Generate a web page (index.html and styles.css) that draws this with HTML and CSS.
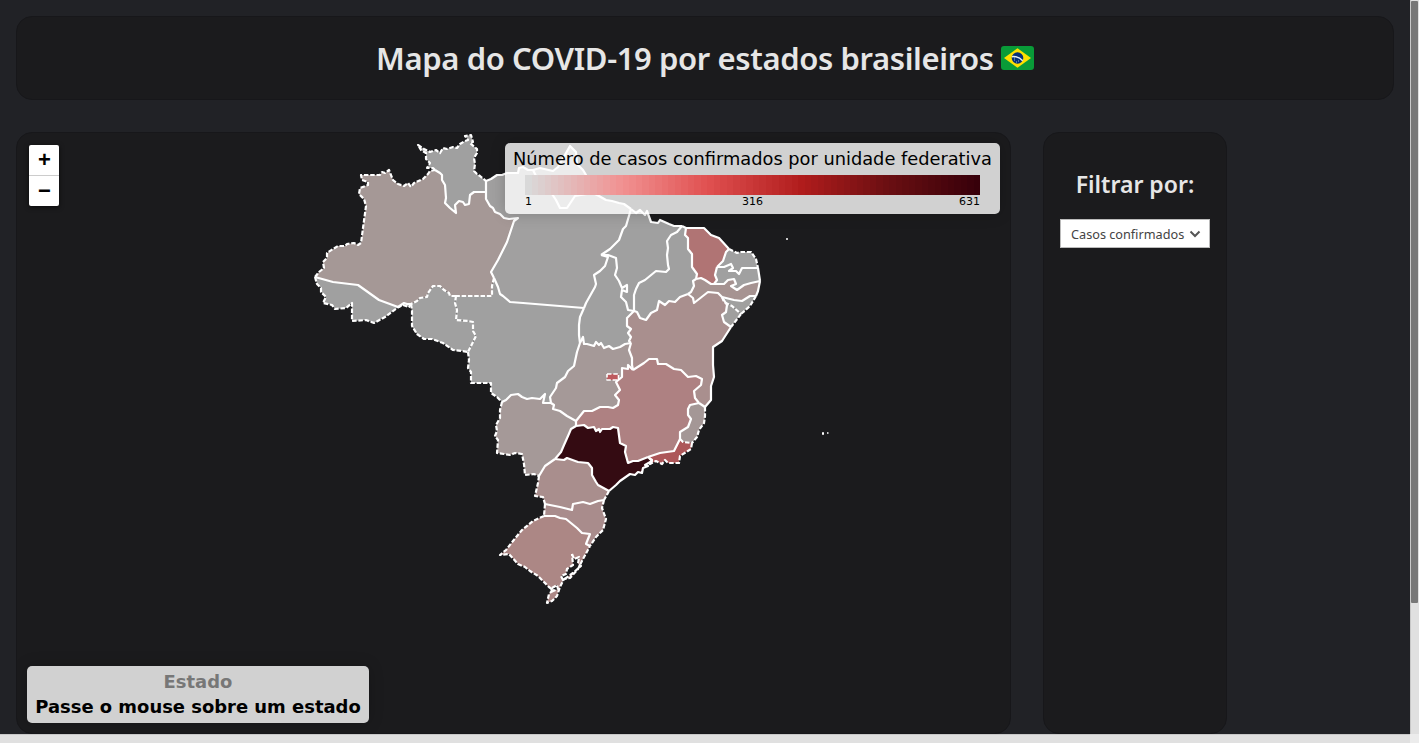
FILE: index.html
```html
<!DOCTYPE html>
<html lang="pt-BR">
<head>
<meta charset="utf-8">
<title>Mapa do COVID-19</title>
<link rel="stylesheet" href="styles.css">
</head>
<body>
<div class="page">
  <header class="card header">
    <h1 class="title">Mapa do COVID-19 por estados brasileiros</h1>
    <svg class="flag" viewBox="0 0 33 24"><rect width="33" height="24" rx="3" fill="#099b38"/><path d="M16.5 2.2 30 12 16.5 21.8 3 12z" fill="#fee000"/><circle cx="16.5" cy="12" r="5.8" fill="#063078"/><path d="M11 10.7q6.5-.7 10.7 4.1" fill="none" stroke="#e4edf5" stroke-width="1.5"/><path d="M13 14h1M15 16h1M17 15h1M13 12h1" stroke="#9ab9da"/></svg>
  </header>
  <main class="content">
    <section class="card map">
      <svg class="states" id="states" viewBox="17 133 993 600"></svg>
      <div class="zoom"><span class="zoom-btn">+</span><span class="zoom-btn">−</span></div>
      <div class="panel legend">
        <div class="legend-title">Número de casos confirmados por unidade federativa</div>
        <div class="ramp" id="ramp"></div>
        <div class="ticks"><span>1</span><span class="tick-mid">316</span><span class="tick-end">631</span></div>
      </div>
      <div class="panel info"><div class="info-title">Estado</div><div>Passe o mouse sobre um estado</div></div>
    </section>
    <aside class="card filter">
      <h2 class="filter-title">Filtrar por:</h2>
      <div class="select"><span>Casos confirmados</span><svg class="chevron" viewBox="0 0 12 8"><path d="M1.500 1.500 6 6l4.500-4.500" fill="none" stroke="#555" stroke-width="2"/></svg></div>
    </aside>
  </main>
</div>
<div class="vbar"><div class="thumb"></div></div>
<div class="hbar"></div>
<div class="corner"></div>
<script src="map.js"></script>
</body>
</html>
```
FILE: styles.css
```css
* { box-sizing: border-box; }
body { margin: 0; height: 743px; overflow: hidden; display: grid; grid-template: 734px 9px / 1410px 9px; background: #212226; font-family: "Noto Sans", sans-serif; }
.page { overflow: hidden; padding: 16px; }
.card { background: #1b1b1d; border: 1px solid #17171a; border-radius: 16px; }
.header { width: 1378px; height: 84px; display: flex; align-items: center; justify-content: center; gap: 7px; }
.title { margin: 0; width: 618px; color: #e6e6e6; font-size: 31px; font-weight: 600; line-height: 40px; letter-spacing: -.38px; white-space: nowrap; }
.flag { width: 33px; height: 24px; margin-top: -1px; }
.content { display: flex; gap: 32px; margin-top: 32px; }
.map { position: relative; width: 995px; height: 602px; overflow: hidden; }
.states { display: block; width: 993px; height: 600px; }
.zoom { position: absolute; left: 12px; top: 12px; width: 30px; height: 61px; background: #fff; border-radius: 2px; box-shadow: 0 1px 5px rgba(0,0,0,.65); }
.zoom-btn { display: block; height: 31px; padding-left: 1px; color: #000; font: bold 22px/30px "Liberation Sans", sans-serif; text-align: center; }
.zoom-btn:first-child { border-bottom: 1px solid #ccc; }
.panel { position: absolute; background: rgba(255,255,255,.8); border-radius: 5px; box-shadow: 0 0 15px rgba(0,0,0,.2); color: #000; font-family: "DejaVu Sans", sans-serif; white-space: nowrap; }
.legend { left: 488px; top: 10px; width: 495px; height: 71px; padding: 6px 8px; }
.legend-title { font-size: 17.800px; line-height: 20px; }
.ramp { display: flex; margin: 6px 12px 0; height: 20px; }
.ramp-step { flex: 1; }
.ticks { display: grid; grid-template-columns: 1fr 1fr 1fr; margin: 0 12px; font-size: 11px; line-height: 13px; }
.tick-mid { text-align: center; }
.tick-end { text-align: right; }
.info { left: 10px; top: 533px; width: 342px; height: 57px; padding: 3px 8px; font-weight: bold; font-size: 17.950px; line-height: 25px; display: flex; flex-direction: column; align-items: center; }
.info-title { color: #777; }
.filter { width: 184px; height: 602px; padding: 33px 16px; display: flex; flex-direction: column; align-items: center; }
.filter-title { margin: 0; color: #e6e6e6; font-size: 23px; font-weight: 600; line-height: 36px; white-space: nowrap; }
.select { margin-top: 17px; width: 150px; height: 29px; background: #fff; border: 1px solid #bbb; color: #444; font-size: 12.700px; display: flex; align-items: center; justify-content: space-between; padding: 0 8px 0 10px; white-space: nowrap; flex: none; }
.chevron { width: 12px; height: 8px; }
.vbar { background: #e0e0e0; border-left: 1px solid #c8c8c8; padding-top: 1px; }
.thumb { width: 7px; height: 602px; background: #777; border-radius: 1px; }
.hbar { background: #e0e0e0; border-top: 1px solid #c8c8c8; }
.corner { background: #ececec; }
```
FILE: map.js
```js
// Shared borders; a leading "~" marks a dashed one.
const arcs = {
  amW: "~315 277 319 272 324 268 323 262 327 258 327 253 333 249 338 246 345 246 347 244 354 243 358 245 361 243 363 228 366 206 364 199 359 194 360 188 368 185 368 182 362 180 361 175 380 175 382 172 385 173 389 170 393 180 398 184 404 186 408 183 411 187 414 183 423 179 428 174 430 171 435 170",
  rrN: "~435 170 433 168 427 168 430 163 426 159 426 153 421 150 418 145 424 149 430 152 436 150 440 153 443 148 447 149 453 147 457 148 460 144 465 141 468 140 465 136 471 135 473 142 470 143 477 149 477 153 474 158 475 164 474 171 477 174 480 176 486 181",
  amRR: "435 170 440 173 442 175 442 180 445 185 446 198 445 203 450 208 456 213 455 205 459 201 463 202 465 205 469 204 470 195 474 192 486 192",
  rrPA: "486 181 486 192",
  amPA: "486 192 486 199 490 206 493 208 495 212 500 214 504 218 509 219 518 218 514 221 507 242 498 260 491 272 494 278",
  amMT: "~494 278 492 286 492 296 456 296",
  amRO: "~456 296 450 296 449 293 444 290 440 286 433 286 428 293 427 297 420 298 417 301 411 304",
  amAC: "411 304 407 304 404 303 398 307 379 300 358 285 333 282 315 277",
  acS: "~315 277 317 284 321 288 321 292 326 297 323 303 332 305 335 309 346 308 352 303 352 321 366 320 374 323 385 317 397 308 403 305 409 307 411 304",
  roS: "~411 304 412 311 412 326 417 334 424 339 432 339 443 343 453 350 462 351 468 352",
  roMT: "~456 296 455 303 457 310 456 320 468 321 473 322 473 331 476 336 471 346 468 352",
  paMT: "494 278 498 287 500 294 503 296 510 302 523 303 584 308",
  mtW: "~468 352 469 360 468 368 471 372 471 383 491 383 491 393 497 397 502 402",
  mtMS: "502 402 506 400 511 395 518 394 522 397 527 399 532 398 540 399 545 394 543 403 551 403",
  mtGO: "551 403 550 397 556 388 557 383 565 377 568 371 574 366 577 352 580 343",
  mtTO: "580 343 579 335 579 325 580 317 584 308",
  toPA: "584 308 586 303 595 287 596 284 594 275 600 271 605 266 608 257 601 255",
  paMA: "601 255 610 249 619 240 623 229 626 226 631 209",
  paN: "486 181 491 179 497 175 502 175 507 173 518 173 519 168 523 167 528 170 533 170",
  apN: "533 170 540 168 553 171 558 167 562 160 570 146 576 152 577 164 583 170 586 175 590 188 593 193",
  apPA: "533 170 538 180 552 194 556 200 560 208 567 208 571 202 575 196 593 193",
  paCoast: "593 193 599 196 606 200 612 201 619 203 624 204 631 209",
  maCoast: "631 209 636 213 640 210 645 215 647 211 651 222 658 223 660 220 669 224 674 226 682 226",
  maPI: "682 226 677 232 671 235 667 241 668 248 667 255 668 265 669 269 666 272 656 271 645 280 639 283 636 289 634 295 634 311",
  piCoast: "682 226 686 228",
  piCE: "686 228 685 235 688 238 688 249 692 254 692 267 697 274 696 279",
  piPE: "696 279 693 281 694 286 691 292 688 294",
  piBA: "688 294 680 297 675 302 669 301 665 305 659 301 657 310 651 313 646 320 640 318 637 312 634 311",
  maTO: "601 255 608 255 616 258 617 268 615 275 619 281 622 288 627 285 627 292 622 290 621 297 626 302 628 310 634 311",
  toBA: "634 311 627 318 627 326 631 329 628 333 631 337 629 341 631 343",
  goTO: "580 343 583 337 584 344 587 344 594 346 596 342 599 345 601 343 604 348 609 346 613 349 620 347 625 344 631 343",
  goBA: "631 343 629 350 632 358 632 365 633 370",
  baMG: "633 370 644 363 649 359 657 359 658 364 666 364 674 369 681 370 688 377 696 376 702 379 701 385 694 391 695 398 699 403",
  baES: "699 403 705 407",
  baCoast: "731 327 722 341 713 347 713 365 714 377 711 386 711 400 705 407",
  goMG: "633 370 628 365 628 369 622 368 622 377 616 382 620 390 615 395 619 400 618 405 613 408 608 407 600 407 592 411 584 411 576 421",
  goMS: "551 403 554 405 553 409 560 411 567 416 576 421",
  mgMS: "576 421 576 426",
  mgSP: "576 426 584 425 588 428 594 427 596 431 599 429 600 432 602 429 610 429 613 427 618 428 620 443 626 446 625 452 628 463 633 461 638 461 648 457",
  mgRJ: "648 457 660 453 674 451 680 439",
  mgES: "680 439 680 432 688 427 691 419 688 415 688 409 690 405 699 403",
  esCoast: "~705 407 705 416 704 423 699 430 697 437 692 443",
  rjES: "~680 439 683 442 692 443",
  rjCoast: "~692 443 691 449 680 456 679 463 668 463 665 460 662 464 656 461 650 464 652 460 648 457",
  spCoast: "648 457 652 461 645 465 648 466 643 468 642 473 638 472 635 475 630 474 620 481 616 485 609 491",
  spPR: "555 459 564 460 567 458 578 462 588 463 592 468 592 475 596 482 598 485 609 491",
  msSP: "576 426 571 429 568 436 564 445 561 452 555 459",
  msPR: "555 459 545 466 539 476",
  msW: "~502 402 500 410 500 418 496 425 497 431 495 436 498 440 497 453 504 454 510 455 515 453 522 454 524 464 525 475 534 474 539 476",
  prW: "~539 476 538 483 535 496 543 497 545 504",
  prSC: "545 504 560 507 572 510 573 504 583 502 590 504 598 501 604 500",
  prCoast: "~609 491 604 500",
  scCoast: "~604 500 602 508 606 519 603 530 596 537 590 546",
  scW: "~545 504 544 516",
  scRS: "544 516 555 516 560 518 566 519 577 528 582 533 590 534 586 544 590 546",
  rsW: "~544 516 533 521 522 530 513 541 506 550 500 555 509 554 518 564 525 567 530 571 538 576 549 587 553 590 549 594 547 603 552 601 557 596 560 587 564 579 570 578 578 569 583 559 590 546",
  ceCoast: "686 228 704 228 711 235 719 238 729 249",
  ceRN: "729 249 726 252 723 261 717 267",
  cePB: "717 267 715 275 717 280 714 284",
  cePE: "714 284 711 284 705 280 701 278 696 279",
  rnCoast: "~729 249 737 253 741 252 751 252 756 259 758 268",
  rnPB: "717 267 724 267 731 264 733 268 729 271 736 271 739 274 742 268 758 268",
  pbCoast: "758 268 760 281",
  pbPE: "714 284 724 284 728 280 734 279 736 284 731 286 737 290 744 285 751 283 760 281",
  peCoast: "760 281 758 291 756 296",
  peAL: "756 296 750 296 742 301 734 300 722 297",
  peBA: "722 297 718 293 708 292 694 303 693 298 688 294",
  alCoast: "~756 296 750 306 741 314",
  alSE: "~722 297 724 302 732 306 741 314",
  seBA: "722 297 727 305 726 312 722 315 724 322 731 327",
  seCoast: "~741 314 731 327",
  df: "~607 374 618.500 374 618.500 380 607 380 607 374",
  lagoon: "~572 554 574 559 579 557 578 564 581 566 573 573 563 580 561 576 566 574 567 569 573 565 572 554",
  mirim: "~552 588 557 585 558 589 551 592 552 588"
};
const states = [
  ["#a59896", "amW amRR amPA amMT amRO amAC"],
  ["#a0a0a0", "rrN rrPA amRR"],
  ["#a0a0a0", "amAC roS acS"],
  ["#a0a0a0", "amRO roMT roS"],
  ["#a1a0a0", "paN apPA paCoast paMA toPA paMT amPA rrPA"],
  ["#a0a0a0", "apN apPA"],
  ["#a0a0a0", "amMT paMT mtTO mtGO mtMS mtW roMT"],
  ["#a0a0a0", "mtTO toPA maTO toBA goTO"],
  ["#a0a0a0", "paMA maCoast maPI maTO"],
  ["#a0a0a0", "maPI piCoast piCE piPE piBA"],
  ["#b07474", "ceCoast ceRN cePB cePE piCE"],
  ["#a0a0a0", "rnCoast rnPB ceRN"],
  ["#a0a0a0", "rnPB pbCoast pbPE cePB"],
  ["#a69391", "pbPE peCoast peAL peBA piPE cePE"],
  ["#a0a09f", "peAL alCoast alSE"],
  ["#a09f9e", "alSE seCoast seBA"],
  ["#a98f8e", "piBA peBA seBA baCoast baES baMG goBA toBA"],
  ["#a59998", "mtGO goTO goBA goMG goMS"],
  ["#ae8182", "baMG mgES mgRJ mgSP mgMS goMG"],
  ["#a49796", "baES esCoast rjES mgES"],
  ["#ad5759", "rjES rjCoast mgRJ"],
  ["#340b12", "mgSP spCoast spPR msSP"],
  ["#a59998", "mtMS goMS mgMS msSP msPR msW"],
  ["#a98e8d", "spPR prCoast prSC prW msPR"],
  ["#a98c8c", "prSC scCoast scRS scW"],
  ["#ac8785", "scRS rsW"],
  ["#bd5a5e", "df"],
  ["#1b1b1d", "lagoon"],
  ["#1b1b1d", "mirim"]
];

const points = {};
for (const k in arcs) {
  const n = arcs[k].replace("~", "").split(" ").map(Number);
  points[k] = [];
  for (let i = 0; i < n.length; i += 2) points[k].push([n[i], n[i + 1]]);
}
const same = (a, b) => a[0] === b[0] && a[1] === b[1];

// Joins a state's borders end to end into one ring.
function ring(keys) {
  const left = keys.split(" ").map(k => points[k]);
  let out = left.shift().slice();
  while (left.length) {
    const end = out[out.length - 1];
    const i = left.findIndex(a => same(a[0], end) || same(a[a.length - 1], end));
    if (i < 0) break;
    const a = left.splice(i, 1)[0];
    out = out.concat(same(a[0], end) ? a.slice(1) : a.slice().reverse().slice(1));
  }
  return out;
}
const path = p => "M" + p.map(q => q.join(" ")).join("L");
let svg = states.map(s => `<path d="${path(ring(s[1]))}Z" fill="${s[0]}"/>`).join("");
for (const k in arcs) {
  const dash = arcs[k][0] === "~" ? ' stroke-dasharray="4.500 1.800"' : "";
  const width = k === "df" ? 1.6 : 2.2;
  svg += `<path d="${path(points[k])}" fill="none" stroke="#fff" stroke-width="${width}" stroke-linejoin="round"${dash}/>`;
}
svg += '<path d="M786 239h2M822 433h2M827 433h1.500M822 434h2" stroke="#fff" stroke-width="1.700"/>';
document.getElementById("states").innerHTML = svg;

const stops = [[0, 217, 217, 217], [.21, 241, 145, 145], [.4, 224, 80, 80], [.61, 176, 28, 28], [.8, 107, 15, 18], [1, 55, 0, 10]];
let ramp = "";
for (let i = 0; i < 70; i++) {
  const t = i / 69;
  let j = 1;
  while (stops[j][0] < t) j++;
  const a = stops[j - 1], b = stops[j], f = (t - a[0]) / (b[0] - a[0]);
  ramp += `<div class="ramp-step" style="background:rgb(${[1, 2, 3].map(c => Math.round(a[c] + (b[c] - a[c]) * f))})"></div>`;
}
document.getElementById("ramp").innerHTML = ramp;
```
